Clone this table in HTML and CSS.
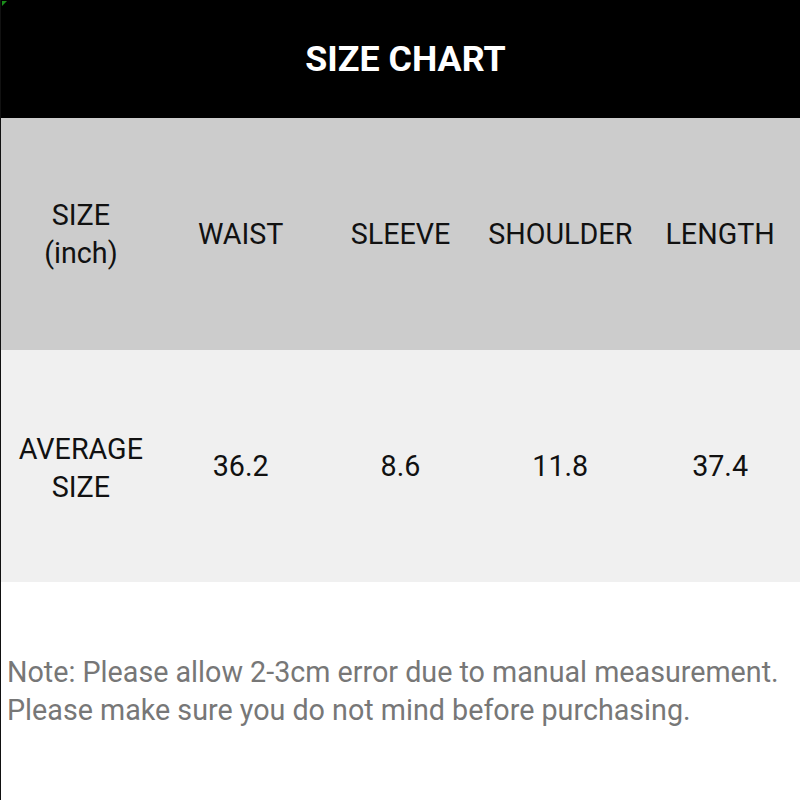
FILE: index.html
```html
<!DOCTYPE html>
<html>
<head>
<meta charset="utf-8">
<link rel="stylesheet" href="styles.css">
</head>
<body>
<div class="page">
  <div class="corner"></div>
  <header class="title-bar"><h1 class="title">SIZE CHART</h1></header>
  <div class="row row-head">
    <div class="cell">SIZE<br>(inch)</div>
    <div class="cell">WAIST</div>
    <div class="cell">SLEEVE</div>
    <div class="cell">SHOULDER</div>
    <div class="cell">LENGTH</div>
  </div>
  <div class="row row-data">
    <div class="cell">AVERAGE<br>SIZE</div>
    <div class="cell">36.2</div>
    <div class="cell">8.6</div>
    <div class="cell">11.8</div>
    <div class="cell">37.4</div>
  </div>
  <div class="note">
    <p>Note: Please allow 2-3cm error due to manual measurement.</p>
    <p>Please make sure you do not mind before purchasing.</p>
  </div>
</div>
</body>
</html>
```
FILE: styles.css
```css
html, body { margin: 0; padding: 0; }
body { background: #fff; font-family: Roboto, "Liberation Sans", sans-serif; }
.page {
  position: relative;
  width: 800px;
  height: 800px;
  overflow: hidden;
  display: flex;
  flex-direction: column;
  border-left: 1px solid #111;
  box-sizing: border-box;
}
.corner {
  position: absolute;
  left: 1px; top: 1px;
  width: 0; height: 0;
  border-top: 5px solid #1a8c1a;
  border-right: 5px solid transparent;
}
.title-bar {
  height: 118px;
  background: #000;
  display: flex;
  align-items: center;
  justify-content: center;
}
.title {
  margin: 0 0 0 10px;
  color: #fff;
  font-weight: 700;
  font-size: 35.8px;
  letter-spacing: 0;
}
.row {
  height: 232px;
  display: grid;
  grid-template-columns: repeat(5, 1fr);
  align-items: center;
}
.row-head { background: #cccccc; }
.row-data { background: #f0f0f0; }
.cell {
  text-align: center;
  color: #111;
  font-size: 28.7px;
  line-height: 38px;
}
.row-data .cell:first-child { padding-top: 3px; }
.note {
  flex: 1;
  padding: 71px 0 0 6px;
  color: #777;
  font-size: 28.7px;
  line-height: 38px;
}
.note p { margin: 0; white-space: nowrap; }
```
